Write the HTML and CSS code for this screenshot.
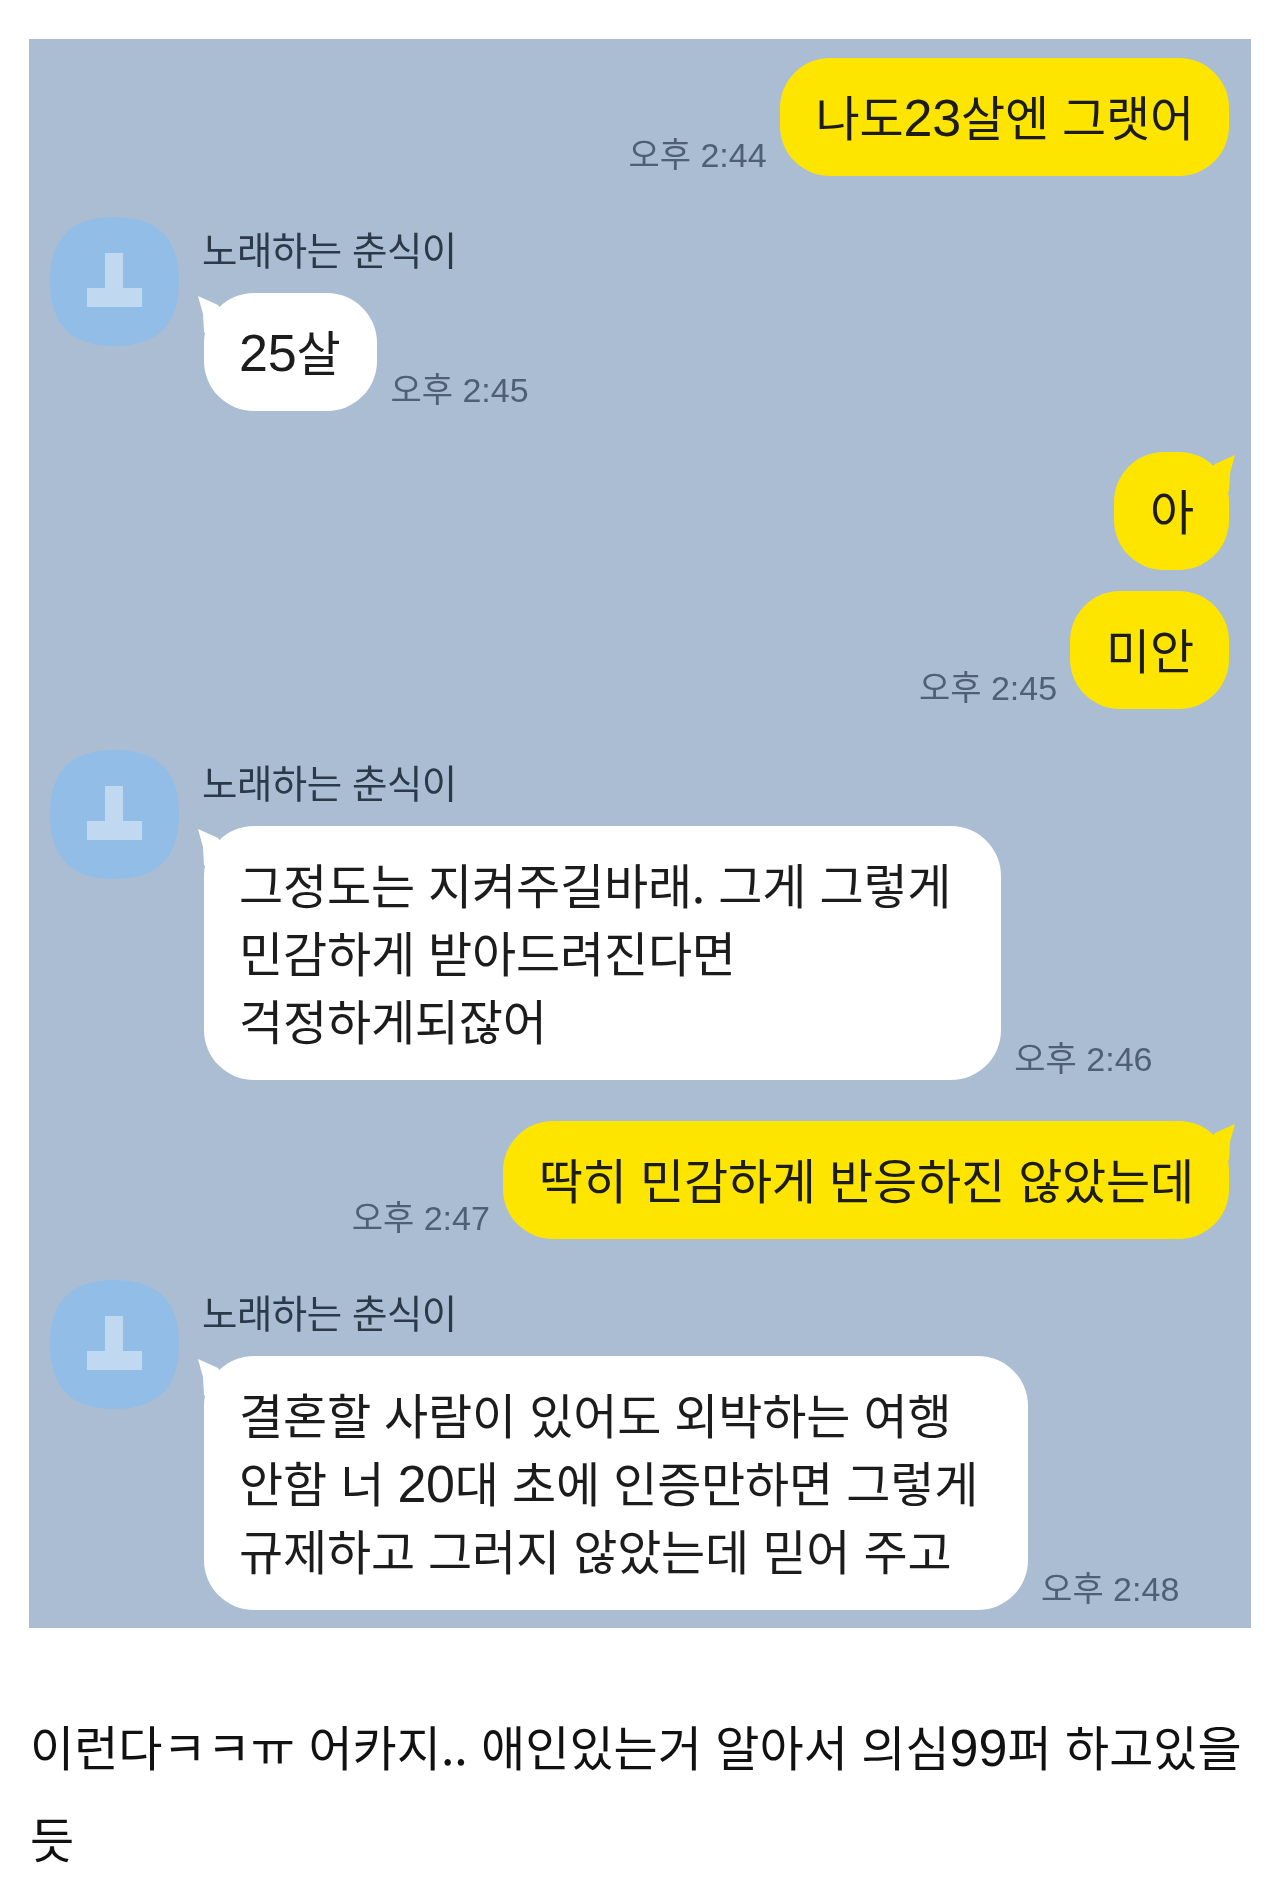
FILE: index.html
```html
<!DOCTYPE html>
<html lang="ko">
<head>
    <meta charset="UTF-8">
    <meta name="viewport" content="width=device-width, initial-scale=1.0">
    <title>노래하는 춘식이</title>
    <link rel="stylesheet" href="styles.css">
</head>
<body>
    <div class="chat">
        <div class="row me">
            <span class="time">오후 2:44</span>
            <div class="bubble yellow">나도<span class="num">23</span>살엔 그랫어</div>
        </div>

        <div class="row them first">
            <svg class="avatar" viewBox="0 0 129 129">
                <path class="avatar-bg" d="M64 0C108 0 129 21 129 64C129 108 108 129 64 129C21 129 0 108 0 64C0 21 21 0 64 0Z"/>
                <path class="avatar-fg" d="M55 36H73V71H92V90H37V71H55Z"/>
            </svg>
            <div class="msg">
                <div class="name">노래하는 춘식이</div>
                <div class="line">
                    <div class="bubble white tail"><span class="num">25</span>살</div>
                    <span class="time">오후 2:45</span>
                </div>
            </div>
        </div>

        <div class="row me first">
            <div class="bubble yellow tail">아</div>
        </div>
        <div class="row me next">
            <span class="time">오후 2:45</span>
            <div class="bubble yellow">미안</div>
        </div>

        <div class="row them first">
            <svg class="avatar" viewBox="0 0 129 129">
                <path class="avatar-bg" d="M64 0C108 0 129 21 129 64C129 108 108 129 64 129C21 129 0 108 0 64C0 21 21 0 64 0Z"/>
                <path class="avatar-fg" d="M55 36H73V71H92V90H37V71H55Z"/>
            </svg>
            <div class="msg">
                <div class="name">노래하는 춘식이</div>
                <div class="line">
                    <div class="bubble white tail wide">그정도는 지켜주길바래. 그게 그렇게<br>민감하게 받아드려진다면<br>걱정하게되잖어</div>
                    <span class="time">오후 2:46</span>
                </div>
            </div>
        </div>

        <div class="row me first">
            <span class="time">오후 2:47</span>
            <div class="bubble yellow tail">딱히 민감하게 반응하진 않았는데</div>
        </div>

        <div class="row them first">
            <svg class="avatar" viewBox="0 0 129 129">
                <path class="avatar-bg" d="M64 0C108 0 129 21 129 64C129 108 108 129 64 129C21 129 0 108 0 64C0 21 21 0 64 0Z"/>
                <path class="avatar-fg" d="M55 36H73V71H92V90H37V71H55Z"/>
            </svg>
            <div class="msg">
                <div class="name">노래하는 춘식이</div>
                <div class="line">
                    <div class="bubble white tail wide">결혼할 사람이 있어도 외박하는 여행<br>안함 너 <span class="num">20</span>대 초에 인증만하면 그렇게<br>규제하고 그러지 않았는데 믿어 주고</div>
                    <span class="time">오후 2:48</span>
                </div>
            </div>
        </div>
    </div>

    <p class="caption">이런다ㅋㅋㅠ 어카지.. 애인있는거 알아서 의심<span class="num">99</span>퍼 하고있을 듯</p>
</body>
</html>
```

FILE: styles.css
```css
body {
    margin: 0;
    background-color: white;
    font-family: "Noto Sans CJK KR", "Noto Sans", sans-serif;
}

.chat {
    display: flex;
    flex-direction: column;
    margin: 39px 29px 0;
    padding: 19px 22px 18px 21px;
    background-color: #abbdd2;
    filter: blur(0.6px);
}

.row {
    display: flex;
    align-items: flex-end;
    gap: 13px;
}

.row.me {
    justify-content: flex-end;
}

.row.them {
    align-items: flex-start;
    gap: 25px;
}

.row.first {
    margin-top: 41px;
}

.row.next {
    margin-top: 21px;
}

.avatar {
    width: 129px;
    height: 129px;
    flex-shrink: 0;
}

.avatar-bg {
    fill: #92bde6;
}

.avatar-fg {
    fill: #c0d8f0;
}

.name {
    height: 66px;
    margin: 0 0 10px -2px;
    font-size: 38.5px;
    line-height: 62px;
    letter-spacing: -0.5px;
    color: #2b3a4b;
}

.line {
    display: flex;
    align-items: flex-end;
    gap: 13px;
}

.bubble {
    position: relative;
    padding: 23px 35px 27px 36px;
    border-radius: 50px;
    font-size: 48px;
    line-height: 68px;
    letter-spacing: -0.2px;
    white-space: nowrap;
    color: #1c1c1c;
}

.bubble.yellow {
    background-color: #fee500;
}

.bubble.white {
    padding-left: 35px;
    padding-right: 37px;
    background-color: white;
}

.bubble.wide {
    padding-right: 50px;
}

/* digits in the shot are a bit bigger than the hangul */
.num {
    font-family: "Liberation Sans", sans-serif;
    font-size: 52px;
    line-height: 0;
}

/* little tip on the first bubble of a run */
.bubble.tail::before {
    content: "";
    position: absolute;
    top: 3px;
    width: 40px;
    height: 40px;
}

.bubble.white.tail::before {
    left: -6px;
    background-color: white;
    clip-path: polygon(0 0, 20px 9px, 34px 30px, 10px 40px, 6px 36px, 5px 18px);
}

.bubble.yellow.tail::before {
    right: -6px;
    background-color: #fee500;
    clip-path: polygon(40px 0, 20px 9px, 6px 30px, 30px 40px, 34px 36px, 35px 18px);
}

.time {
    margin-bottom: 1px;
    font-family: "Liberation Sans", "Noto Sans CJK KR", sans-serif;
    font-size: 34px;
    line-height: 40px;
    white-space: nowrap;
    color: #4e6073;
}

.caption {
    margin: 71px 29px 0 30px;
    font-size: 48px;
    line-height: 92px;
    color: #111;
    filter: blur(0.4px);
}
```
